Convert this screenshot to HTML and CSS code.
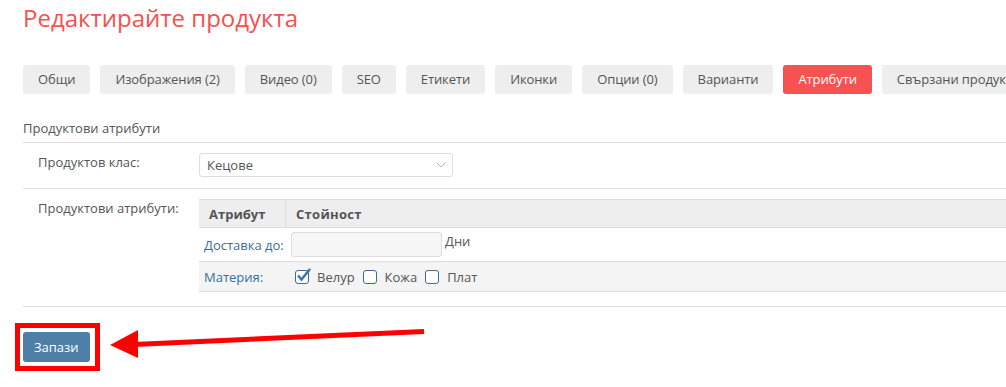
FILE: index.html
```html
<!DOCTYPE html>
<html lang="bg">

<head>
    <meta charset="UTF-8">
    <title>Редактирайте продукта</title>
    <link rel="stylesheet" href="styles.css">
</head>

<body>
<div class="page">
    <h1 class="page-title">Редактирайте продукта</h1>

    <nav class="tabs">
        <a class="tab" href="#">Общи</a>
        <a class="tab" href="#">Изображения (2)</a>
        <a class="tab" href="#">Видео (0)</a>
        <a class="tab" href="#">SEO</a>
        <a class="tab" href="#">Етикети</a>
        <a class="tab" href="#">Иконки</a>
        <a class="tab" href="#">Опции (0)</a>
        <a class="tab" href="#">Варианти</a>
        <a class="tab tab--active" href="#">Атрибути</a>
        <a class="tab" href="#">Свързани продукти</a>
    </nav>

    <h2 class="section-title">Продуктови атрибути</h2>

    <div class="form-row">
        <label class="form-label">Продуктов клас:</label>
        <div class="form-field">
            <div class="select">
                <span>Кецове</span>
                <svg class="select__arrow" width="10" height="6" viewBox="0 0 10 6">
                    <path d="M0.5 0.5L5 5L9.5 0.5" fill="none" stroke="#b5b5b5" stroke-width="1" />
                </svg>
            </div>
        </div>
    </div>

    <div class="form-row form-row--attrs">
        <label class="form-label">Продуктови атрибути:</label>
        <div class="form-field">
            <table class="attr-table">
                <thead>
                <tr>
                    <th class="attr-table__name">Атрибут</th>
                    <th>Стойност</th>
                </tr>
                </thead>
                <tbody>
                <tr>
                    <td><a class="attr-link" href="#">Доставка до:</a></td>
                    <td>
                        <div class="value">
                            <input class="text-input" type="text">
                            <span class="unit">Дни</span>
                        </div>
                    </td>
                </tr>
                <tr class="attr-table__alt">
                    <td><a class="attr-link" href="#">Материя:</a></td>
                    <td>
                        <div class="value">
                            <span class="check-item">
                                <span class="checkbox checkbox--on">
                                    <svg width="17" height="17" viewBox="0 0 17 17">
                                        <path d="M3 8.5L6.5 12.5L15 2" fill="none" stroke="#3a78b5" stroke-width="2.6" />
                                    </svg>
                                </span>
                                Велур
                            </span>
                            <span class="check-item"><span class="checkbox"></span>Кожа</span>
                            <span class="check-item"><span class="checkbox"></span>Плат</span>
                        </div>
                    </td>
                </tr>
                </tbody>
            </table>
        </div>
    </div>

    <div class="actions">
        <button class="btn-save" type="submit">Запази</button>
    </div>
</div>

<!-- annotation drawn over the page -->
<svg class="annotation" width="1006" height="387" viewBox="0 0 1006 387">
    <rect x="17.5" y="325.5" width="80" height="43" fill="none" stroke="#ff0000" stroke-width="5" />
    <path d="M424 331.5L134 344.5" stroke="#ff0000" stroke-width="5" />
    <polygon points="110,345 138,330 138,358" fill="#ff0000" />
</svg>
</body>

</html>
```

FILE: styles.css
```css
body {
  font-family: "Open Sans", "DejaVu Sans", sans-serif;
  font-size: 13px;
  color: #555555;
  margin: 0;
  padding: 0;
  background-color: #FFFFFF;
  overflow: hidden;
}

.page {
  padding: 0 0 0 23px;
}

.page-title {
  font-weight: 400;
  font-size: 24px;
  line-height: 29px;
  color: #F4524F;
  margin: 3px 0 0 0;
}

.tabs {
  display: flex;
  flex-wrap: nowrap;
  gap: 10px;
  margin-top: 33px;
}

.tab {
  flex-shrink: 0;
  padding: 0 15px;
  line-height: 29px;
  background-color: #EEEEEE;
  border-radius: 3px;
  color: #555555;
  text-decoration: none;
  white-space: nowrap;
  letter-spacing: -0.1px;
}

.tab--active {
  background-color: #F65252;
  color: #FFFFFF;
}

.section-title {
  font-weight: 400;
  font-size: 13px;
  line-height: 18px;
  margin: 25px 0 0 0;
  padding-bottom: 5px;
  border-bottom: 1px solid #DDDDDD;
}

.form-row {
  display: grid;
  grid-template-columns: 176px 1fr;
  padding: 10px 0 11px;
  border-bottom: 1px solid #DDDDDD;
}

.form-row--attrs {
  padding: 10px 0 14px;
}

.form-label {
  padding-left: 15px;
  line-height: 18px;
}

.select {
  box-sizing: border-box;
  display: flex;
  align-items: center;
  justify-content: space-between;
  width: 254px;
  height: 24px;
  padding: 0 6px 0 7px;
  border: 1px solid #DDDDDD;
  border-radius: 3px;
}

.attr-table {
  width: 100%;
  border-collapse: separate;
  border-spacing: 0;
  table-layout: fixed;
}

.attr-table th {
  height: 27px;
  padding: 0 10px;
  text-align: left;
  font-weight: 700;
  letter-spacing: 0.3px;
  background-color: #EEEEEE;
  border-top: 1px solid #DDDDDD;
  border-bottom: 1px solid #DDDDDD;
}

.attr-table .attr-table__name {
  width: 66px;
  letter-spacing: 0;
  border-right: 1px solid #DDDDDD;
}

.attr-table td {
  padding: 4px 5px;
  border-bottom: 1px solid #DDDDDD;
  vertical-align: middle;
  white-space: nowrap;
}

.attr-table__alt td {
  height: 29px;
  padding: 0 5px;
  background-color: #F4F4F4;
}

.attr-link {
  color: #3A6EA3;
  text-decoration: none;
}

.value {
  display: flex;
  align-items: flex-start;
  gap: 3px;
}

.attr-table__alt .value {
  align-items: center;
  gap: 8px;
  padding-left: 4px;
}

.text-input {
  box-sizing: border-box;
  width: 151px;
  height: 25px;
  margin: 0;
  border: 1px solid #DDDDDD;
  border-radius: 3px;
  background-color: #F6F6F6;
}

.unit {
  line-height: 18px;
}

.check-item {
  display: inline-flex;
  align-items: center;
  gap: 8px;
  line-height: 18px;
}

.checkbox {
  box-sizing: border-box;
  position: relative;
  width: 14px;
  height: 14px;
  border: 1.5px solid #3C6A94;
  border-radius: 3px;
  background-color: #FFFFFF;
}

.checkbox--on svg {
  position: absolute;
  left: -1px;
  top: -4px;
}

.actions {
  padding-top: 25px;
}

.btn-save {
  height: 30px;
  padding: 0 11px;
  background-color: #4E7FA6;
  border: none;
  border-radius: 3px;
  color: #FFFFFF;
  font-family: "Open Sans", "DejaVu Sans", sans-serif;
  font-size: 13px;
}

.annotation {
  position: absolute;
  top: 0;
  left: 0;
  pointer-events: none;
}
```
